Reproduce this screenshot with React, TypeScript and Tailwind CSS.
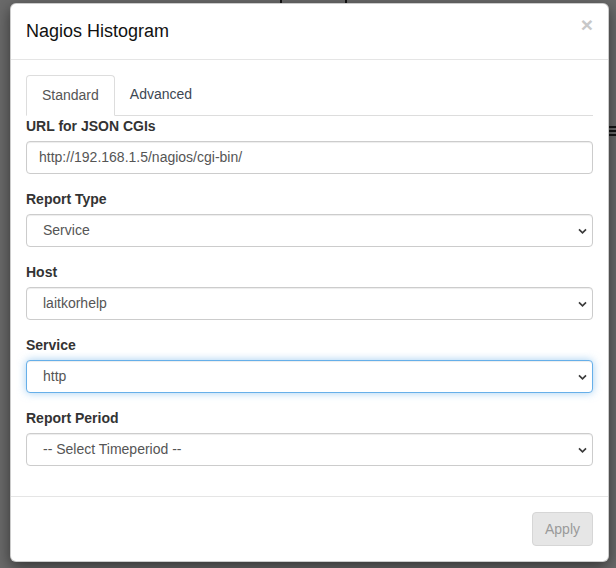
import React from "react";

const Chevron = () => (
  <svg
    className="pointer-events-none absolute right-[4px] top-1/2 -translate-y-1/2"
    width="11"
    height="10"
    viewBox="0 0 11 10"
  >
    <path d="M2 3.4 L5.5 6.8 L9 3.4" fill="none" stroke="#3a3a3a" strokeWidth="1.7" />
  </svg>
);

function Field({
  label,
  children,
}: {
  label: string;
  children: React.ReactNode;
}) {
  return (
    <div className="mb-[15px]">
      <label className="mb-[5px] block text-[14px] font-bold leading-[20px] text-[#333]">
        {label}
      </label>
      {children}
    </div>
  );
}

function Select({ value, focused }: { value: string; focused?: boolean }) {
  return (
    <div
      className={
        focused
          ? "relative h-[33px] w-full rounded-[4px] border border-[#66afe9] bg-white shadow-[inset_0_1px_1px_rgba(0,0,0,0.075),0_0_8px_rgba(102,175,233,0.6)]"
          : "relative h-[33px] w-full rounded-[4px] border border-[#cccccc] bg-white shadow-[inset_0_1px_1px_rgba(0,0,0,0.075)]"
      }
    >
      <div className="flex h-full items-center pl-[16px] text-[14px] text-[#555]">
        {value}
      </div>
      <Chevron />
    </div>
  );
}

export default function App() {
  return (
    <div
      className="relative h-[568px] w-[616px] overflow-hidden bg-[#6a6a6a] pt-[3px] pl-[10px]"
      style={{ fontFamily: '"Liberation Sans", Arial, sans-serif' }}
    >
      {/* content behind backdrop */}
      <div className="absolute left-[280px] top-0 h-[3px] w-[2px] bg-[#111]" />
      <div className="absolute left-[345px] top-0 h-[3px] w-[2px] bg-[#111]" />
      <div className="absolute left-[609px] top-[126px] flex w-[7px] flex-col gap-[2px]">
        <div className="h-[2px] bg-[#111]" />
        <div className="h-[2px] bg-[#111]" />
        <div className="h-[2px] bg-[#111]" />
      </div>

      <div className="w-[599px] rounded-[6px] border border-[rgba(0,0,0,0.2)] bg-white shadow-[0_5px_15px_rgba(0,0,0,0.5)]">
        {/* header */}
        <div className="flex items-start justify-between border-b border-[#e5e5e5] px-[15px] py-[15px]">
          <h4 className="text-[18px] leading-[25px] text-[#111]">Nagios Histogram</h4>
          <span className="mt-[-5px] text-[21px] font-bold leading-[21px] text-[#c8c8c8]">
            ×
          </span>
        </div>

        {/* body */}
        <div className="px-[15px] pt-[15px] pb-[15px]">
          <div className="flex border-b border-[#dddddd]">
            <div className="mb-[-1px] rounded-t-[4px] border border-[#dddddd] border-b-white bg-white px-[15px] py-[10px] text-[14px] leading-[19px] text-[#555]">
              Standard
            </div>
            <div className="px-[15px] py-[10px] text-[14px] leading-[19px] text-[#3d4753]">
              Advanced
            </div>
          </div>

          <Field label="URL for JSON CGIs">
            <div className="flex h-[33px] w-full items-center rounded-[4px] border border-[#cccccc] bg-white px-[12px] text-[14px] text-[#555] shadow-[inset_0_1px_1px_rgba(0,0,0,0.075)]">
              http://192.168.1.5/nagios/cgi-bin/
            </div>
          </Field>
          <Field label="Report Type">
            <Select value="Service" />
          </Field>
          <Field label="Host">
            <Select value="laitkorhelp" />
          </Field>
          <Field label="Service">
            <Select value="http" focused />
          </Field>
          <div>
            <label className="mb-[5px] block text-[14px] font-bold leading-[20px] text-[#333]">
              Report Period
            </label>
            <Select value="-- Select Timeperiod --" />
          </div>
        </div>

        {/* footer */}
        <div className="mt-[15px] flex justify-end border-t border-[#e5e5e5] p-[15px]">
          <button
            disabled
            className="h-[34px] rounded-[4px] border border-[#d6d6d6] bg-[#e6e6e6] px-[12px] text-[14px] leading-[20px] text-[#9a9a9a]"
          >
            Apply
          </button>
        </div>
      </div>
    </div>
  );
}
